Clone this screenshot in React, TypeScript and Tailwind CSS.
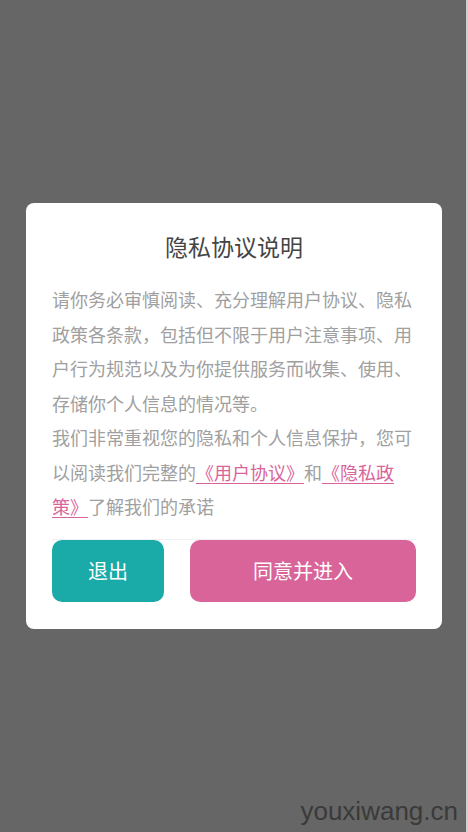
import React from 'react';

const FONT = '"Noto Sans CJK SC", "Noto Sans", sans-serif';

export default function App() {
  return (
    <div
      className="relative flex min-h-screen items-center justify-center bg-[#666666]"
      style={{ fontFamily: FONT }}
    >
      <div className="w-[416px] rounded-[8px] bg-white px-[26px] pt-[28px] pb-[27px]">
        <h2 className="text-center text-[23px] leading-[30px] text-[#444444]">隐私协议说明</h2>
        <div className="mt-[21px] text-[18px] leading-[34.5px] text-[#a0a0a0]">
          <p>请你务必审慎阅读、充分理解用户协议、隐私政策各条款，包括但不限于用户注意事项、用户行为规范以及为你提供服务而收集、使用、存储你个人信息的情况等。</p>
          <p>
            我们非常重视您的隐私和个人信息保护，您可以阅读我们完整的
            <a className="text-[#d9649a] underline underline-offset-[3px]">《用户协议》</a>
            和
            <a className="text-[#d9649a] underline underline-offset-[3px]">《隐私政策》</a>
            了解我们的承诺
          </p>
        </div>
        <div className="mt-[15px] flex gap-[26px] border-t border-[#f2f2f2]">
          <button
            type="button"
            className="h-[62px] w-[112px] rounded-[10px] bg-[#1aaaa7] text-[20px] text-white"
          >
            退出
          </button>
          <button
            type="button"
            className="h-[62px] flex-1 rounded-[10px] bg-[#d9649a] text-[20px] text-white"
          >
            同意并进入
          </button>
        </div>
      </div>
      <div
        className="absolute right-[10px] bottom-[6px] text-[26px] leading-[30px] text-[#3a3a3a]"
        style={{ fontFamily: '"Liberation Sans", Arial, sans-serif' }}
      >
        youxiwang.cn
      </div>
      <div className="absolute top-0 right-0 h-full w-[2px] bg-[#cfcfcf]" />
    </div>
  );
}
